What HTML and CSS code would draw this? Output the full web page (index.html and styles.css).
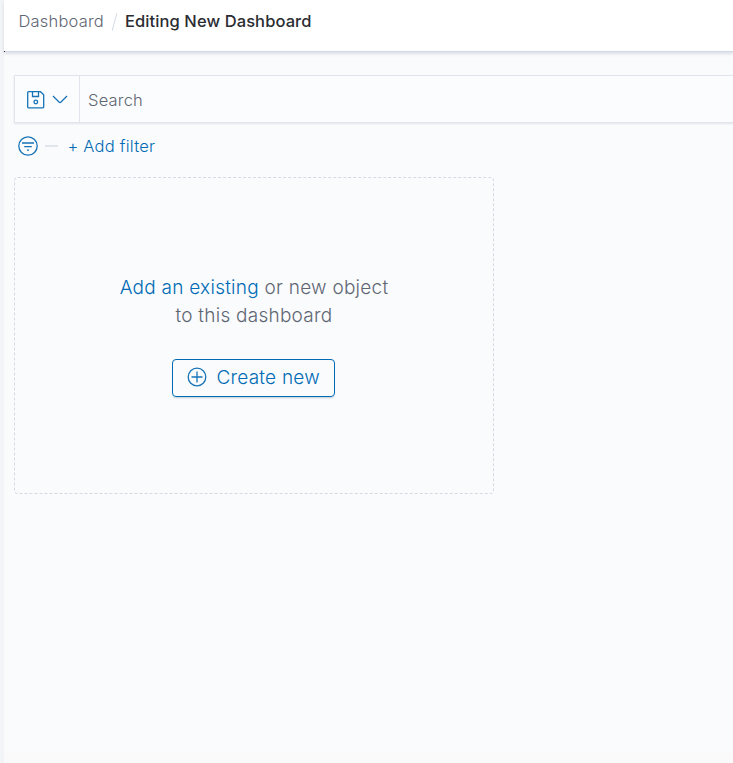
FILE: index.html
```html
<!DOCTYPE html>
<html lang="en">
<head>
<meta charset="utf-8">
<title>Editing New Dashboard</title>
<link rel="stylesheet" href="styles.css">
</head>
<body>
<div class="app">
  <header class="header">
    <nav class="breadcrumbs">
      <a class="crumb">Dashboard</a><span class="separator"></span><span class="crumb-current">Editing New Dashboard</span>
    </nav>
  </header>
  <main class="content">
    <div class="query-bar">
      <div class="saved-query">
        <svg width="18" height="18" viewBox="0 0 18 18"><path d="M1.5 .7h12l3.2 3V16a.8.8 0 0 1-.8.8H1.5a.8.8 0 0 1-.8-.8V1.5a.8.8 0 0 1 .8-.8ZM5.5 1v4.5h6V1"/><circle cx="8.8" cy="11" r="1.8"/></svg>
        <svg width="16" height="9" viewBox="0 0 16 9"><path d="m1 1 6 6q1 .9 2 0l6-6"/></svg>
      </div>
      <div class="search">Search</div>
    </div>
    <div class="filter-bar">
      <svg width="20" height="20" viewBox="0 0 20 20"><circle cx="10" cy="10" r="9.2"/><path d="M4 7h12M6.2 10.6h7.6M9 14.2h2"/></svg>
      <span class="dash"></span>
      <a class="add-filter">+ Add filter</a>
    </div>
    <section class="placeholder">
      <p class="message"><span class="message-line"><a class="link">Add an existing</a> or new object</span><span class="message-line">to this dashboard</span></p>
      <button class="create">
        <svg width="20" height="20" viewBox="0 0 20 20"><circle cx="10" cy="10" r="8.8"/><path d="M4.5 10h11M10 4.5v11"/></svg>
        <span class="create-label">Create new</span>
      </button>
    </section>
  </main>
  <div class="bottom-edge"></div>
</div>
</body>
</html>
```
FILE: styles.css
```css
* { box-sizing: border-box; }
body {
  margin: 0;
  background: #f3f4f7;
  font-family: Inter, "Liberation Sans", sans-serif;
  font-weight: 300;
  color: #5f6673;
  overflow: hidden;
}
svg { display: block; flex: none; fill: none; stroke: #1673b7; stroke-width: 1.3; }
.app {
  height: 763px;
  margin-left: 4px;
  display: flex;
  flex-direction: column;
  background: #fafbfd;
}
.header {
  height: 52px;
  flex: none;
  padding: 9px 0 0 15px;
  background:
    linear-gradient(#1a1c21, #1a1c21) 0 100% / 1px 1px no-repeat,
    linear-gradient(#d3d8e5, #d3d8e5) 0 100% / 100% 1px no-repeat,
    #fff;
  box-shadow: 0 2px 3px rgba(152, 162, 179, .3);
}
.breadcrumbs { display: flex; align-items: center; height: 24px; font-size: 16.5px; white-space: nowrap; }
.crumb { width: 85px; margin-left: -.5px; letter-spacing: .2px; }
.separator { width: 1px; height: 18px; margin: 2px 10px 0 10.5px; background: #d3dae6; transform: rotate(15deg); }
.crumb-current { color: #2a2c31; font-weight: 500; letter-spacing: .09px; }
.content { flex: 1; padding: 23px 0 0 10px; }
.query-bar {
  display: flex;
  height: 48px;
  border: 1px solid #e0e4ed;
  border-right: 0;
  background: #fbfcfd;
  box-shadow: 0 1px 2px rgba(152, 162, 179, .25);
}
.saved-query {
  width: 65px;
  display: flex;
  align-items: center;
  gap: 7px;
  padding: 1px 0 0 11.5px;
  border-right: 1px solid #e0e4ed;
}
.search { padding-left: 8px; line-height: 48px; font-size: 16.5px; letter-spacing: .2px; }
.filter-bar { display: flex; align-items: center; height: 24px; margin: 11px 0 19px; padding-left: 4px; }
.dash { width: 13px; height: 2px; margin: 0 10px 0 7px; background: #e0e5ee; }
.add-filter { color: #006bb4; font-size: 16.5px; margin-left: -.5px; letter-spacing: .22px; white-space: nowrap; }
.placeholder {
  width: 480px;
  height: 317px;
  padding-top: 96px;
  display: flex;
  flex-direction: column;
  align-items: center;
  border: 1px dashed #d3dae6;
  border-radius: 4px;
}
.message { margin: 0 0 29px; font-size: 19px; line-height: 28px; letter-spacing: .25px; text-align: center; }
.message-line { display: block; white-space: nowrap; }
.link { color: #006bb4; }
.create {
  width: 163px;
  height: 38px;
  margin-right: 1px;
  padding: 0 0 2px 13.5px;
  display: flex;
  align-items: center;
  gap: 10px;
  background: transparent;
  border: 1px solid #006bb4;
  border-radius: 4px;
  color: #006bb4;
  font: 300 19px Inter, "Liberation Sans", sans-serif;
  letter-spacing: .22px;
  box-shadow: 0 2px 2px -1px rgba(54, 97, 126, .3);
}
.create-label { white-space: nowrap; }
.bottom-edge { height: 12px; background: #fafafa; }
```
